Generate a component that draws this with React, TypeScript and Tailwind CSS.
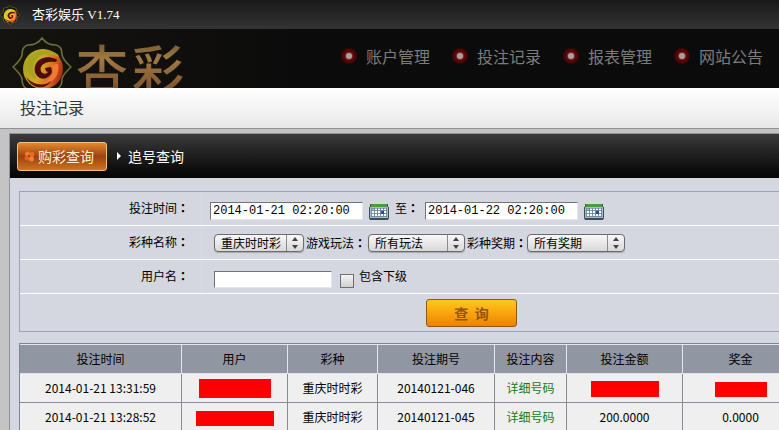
import React, { useState } from 'react';

interface BetRecord {
  time: string;
  userClass: string;
  lottery: string;
  issue: string;
  amount?: string;
  prize?: string;
}

const NAV_ITEMS = ['账户管理', '投注记录', '报表管理', '网站公告'];

const COLUMNS = [
  { title: '投注时间', width: 'w-[162px]' },
  { title: '用户', width: 'w-[106px]' },
  { title: '彩种', width: 'w-[90px]' },
  { title: '投注期号', width: 'w-[117px]' },
  { title: '投注内容', width: 'w-[72px]' },
  { title: '投注金额', width: 'w-[116px]' },
  { title: '奖金', width: 'w-[116px]' },
];

const RECORDS: BetRecord[] = [
  { time: '2014-01-21 13:31:59', userClass: 'w-[72px] h-[19px]', lottery: '重庆时时彩', issue: '20140121-046' },
  { time: '2014-01-21 13:28:52', userClass: 'w-[78px] h-[15px]', lottery: '重庆时时彩', issue: '20140121-045', amount: '200.0000', prize: '0.0000' },
];

function Emblem({ className }: { className: string }) {
  return (
    <svg viewBox="0 0 60 60" className={className} aria-hidden="true">
      <defs>
        <linearGradient id="ball" x1="0" y1="0.3" x2="1" y2="0.6">
          <stop offset="0" stopColor="#a8a41c" />
          <stop offset="0.45" stopColor="#d9a522" />
          <stop offset="0.75" stopColor="#d8641f" />
          <stop offset="1" stopColor="#a52a12" />
        </linearGradient>
      </defs>
      <path
        d="M30 1c4 6 9 7 14 7 5 1 6 5 6 10 1 5 5 8 9 12-4 4-8 7-9 12 0 5-1 9-6 10-5 0-10 1-14 7-4-6-9-7-14-7-5-1-6-5-6-10-1-5-5-8-9-12 4-4 8-7 9-12 0-5 1-9 6-10 5 0 10-1 14-7z"
        fill="#14150d"
        stroke="#6f6f38"
        strokeWidth="1.5"
      />
      <circle cx="31" cy="32" r="20" fill="url(#ball)" />
      <path d="M47 20c-8-4-19-4-24 4-4 7-2 14 3 18-9-1-13-10-10-18 4-9 15-13 25-9 4 1 6 3 6 5z" fill="#a5a51f" />
      <path d="M44 22c-7-3-15-2-19 3-4 6-3 13 3 16 5 2 10-1 12-6l-1-5-6 1 1 3 2 1c-2 3-6 2-7-1-2-5 4-10 13-9 3 0 4-2 2-3z" fill="#4a0d07" />
      <path d="M40 28c2 8-1 15-10 19 11 0 18-9 16-20z" fill="#ef7a34" />
      <path d="M14 40c7 8 18 10 25 4-5 9-19 9-25-4z" fill="#5a1208" />
    </svg>
  );
}

function NavDot() {
  return (
    <svg viewBox="0 0 18 18" className="size-[18px]" aria-hidden="true">
      <circle cx="9" cy="9" r="8.500" fill="#2c0707" />
      <circle cx="9" cy="9" r="7" fill="#560607" />
      <circle cx="9" cy="9" r="4" fill="#7d2c2c" />
      <circle cx="9" cy="9" r="3" fill="#a9a09d" />
    </svg>
  );
}

function CalendarIcon() {
  return (
    <svg viewBox="0 0 20 17" className="h-[17px] w-5" aria-hidden="true">
      <path d="M1 1h18v3h1v11l-1 2H1l-1-2V4h1z" fill="#35505c" />
      <path d="M1 4h18v11H1z" fill="#a9bcc6" />
      <path d="M2 1h16v3H2z" fill="#4c9c3c" />
      <path d="M6 5h2v2H6zM9 5h2v2H9zM12 5h2v2h-2zM15 5h2v2h-2zM3 8h2v2H3zM6 8h2v2H6zM9 8h2v2H9zM15 8h2v2h-2zM3 11h2v2H3zM6 11h2v2H6zM9 11h2v2H9zM12 11h2v2h-2zM15 11h2v2h-2z" fill="#fff" />
      <path d="M3 5.500h14M2.500 5v9M5.500 5v9M8.500 5v9M11.500 5v9M14.500 5v9M17.500 5v9M2 7.500h16M2 10.500h16M2 13.500h16" stroke="#5c7591" strokeWidth="0.6" />
      <path d="M12 8h3v3h-3z" fill="#2448b0" />
    </svg>
  );
}

// full-width colon, centred in its cell
function Colon() {
  return <span className="font-['Noto_Sans_CJK_TC',sans-serif] font-bold">：</span>;
}

function Select({ id, value, className }: { id: string; value: string; className: string }) {
  return (
    <span className={`relative inline-flex ${className}`}>
      <select
        id={id}
        className="h-[18px] w-full appearance-none rounded-[4px] border border-[#6b6b6b] bg-linear-to-b from-[#f8f8f8] to-[#d8d8d8] pl-[6px] text-xs leading-4 text-black shadow-[0_1px_1px_#a5a8ad]"
      >
        <option>{value}</option>
      </select>
      <svg viewBox="0 0 18 18" className="pointer-events-none absolute top-0 right-0 size-[18px]" aria-hidden="true">
        <path d="M0.500 1v16" stroke="#8b8b8b" />
        <path d="M6 7l3-4 3 4zM6 11l3 4 3-4z" fill="#444" />
      </svg>
    </span>
  );
}

function DateInput({ id, label, initial }: { id: string; label: string; initial: string }) {
  const [value, setValue] = useState(initial);
  return (
    <>
      <input
        id={id}
        aria-label={label}
        value={value}
        onChange={(e) => setValue(e.target.value)}
        className="h-[18px] w-[153px] border border-[#e4e6ea] border-t-[#70747a] border-l-[#70747a] bg-white px-[2px] font-['Liberation_Mono',monospace] text-xs text-black"
      />
      <button type="button" aria-label="选择日期" className="mx-[6px]">
        <CalendarIcon />
      </button>
    </>
  );
}

function FormRow({ label, htmlFor, children }: { label: string; htmlFor: string; children: React.ReactNode }) {
  return (
    <div className="flex h-[34px] border-b border-white">
      <label htmlFor={htmlFor} className="w-[182px] shrink-0 border-r border-[#d9dce3] pr-3 text-right leading-8">
        {label}
        <Colon />
      </label>
      {children}
    </div>
  );
}

function Redacted({ className }: { className: string }) {
  return <span className={`inline-block bg-[#fe0000] align-middle ${className}`} />;
}

export default function App() {
  return (
    <div className="flex h-screen flex-col overflow-hidden bg-[#c4c4c4] font-['Noto_Sans_CJK_SC',sans-serif] text-xs text-black">
      <div className="flex h-[29px] shrink-0 items-center bg-linear-to-b from-[#191919] to-[#343434] font-['Liberation_Serif','Noto_Sans_CJK_SC',serif] text-[13px] text-white">
        <Emblem className="mr-3 size-5 shrink-0 brightness-125" />
        杏彩娱乐 V1.74
      </div>

      <header className="flex h-[59px] shrink-0 overflow-hidden bg-linear-to-r from-[#15130f] to-[#0b0b0b] to-40% pl-3">
        <Emblem className="mt-2 size-[60px] shrink-0" />
        <span className="ml-1 flex shrink-0 gap-1 bg-linear-to-b from-[#6e572d] from-20% via-[#a07a42] to-[#80542f] bg-clip-text text-[52px] leading-[76px] font-medium text-transparent">
          <span>杏</span>
          <span>彩</span>
        </span>
        <nav className="ml-auto flex shrink-0 items-center gap-[29px] pr-4 pb-[5px]">
          {NAV_ITEMS.map((item) => (
            <a key={item} href="#" className="flex w-[82px] items-center gap-2 text-base leading-6 whitespace-nowrap text-[#7c7c7c]">
              <span className="-ml-2 shrink-0">
                <NavDot />
              </span>
              {item}
            </a>
          ))}
        </nav>
      </header>

      <h1 className="h-[41px] shrink-0 border-b border-[#929292] bg-linear-to-b from-white to-[#e8e8e8] pl-5 text-base leading-[38px] text-[#333]">
        投注记录
      </h1>

      <main className="mt-1 ml-[9px] min-w-[915px] grow border-t border-l border-[#8e949e] bg-[#d4d7df]">
        <div className="flex h-[44px] items-center gap-[10px] bg-linear-to-b from-[#3b3b3b] to-[#050505] pl-[7px] text-sm text-white">
          <button
            type="button"
            className="flex h-[29px] w-[90px] items-center gap-[3px] rounded-[3px] border border-[#f2c07c] bg-linear-to-b from-[#e58a2c] via-[#9b4210] to-[#cf731f] pl-[6px] text-[#fff4dc]"
          >
            <svg viewBox="0 0 11 11" className="size-[11px]" aria-hidden="true">
              <circle cx="3.500" cy="3" r="2.500" fill="#f2792b" />
              <circle cx="8" cy="3.500" r="2.500" fill="#ee6a22" />
              <circle cx="3" cy="7" r="2.500" fill="#e2601c" />
              <circle cx="7.500" cy="8" r="2.500" fill="#f08036" />
              <circle cx="5" cy="5" r="1" fill="#9b3a10" />
            </svg>
            购彩查询
          </button>
          <a href="#" className="flex items-center gap-[7px]">
            <svg viewBox="0 0 4 8" className="h-2 w-1" aria-hidden="true">
              <path d="M0 0l4 4-4 4z" fill="#fff" />
            </svg>
            追号查询
          </a>
        </div>

        <form className="mt-[13px] ml-[9px] border border-[#9aa5b4]" onSubmit={(e) => e.preventDefault()}>
          <FormRow label="投注时间" htmlFor="start">
            <div className="flex items-end pb-[5px] pl-2">
              <DateInput id="start" label="投注时间" initial="2014-01-21 02:20:00" />
              <label htmlFor="end" className="mr-[6px] leading-6">
                至
                <Colon />
              </label>
              <DateInput id="end" label="至" initial="2014-01-22 02:20:00" />
            </div>
          </FormRow>
          <FormRow label="彩种名称" htmlFor="lottery">
            <div className="flex items-center pl-3">
              <Select id="lottery" value="重庆时时彩" className="mr-[2px] w-[90px]" />
              <label htmlFor="play">
                游戏玩法
                <Colon />
              </label>
              <Select id="play" value="所有玩法" className="mx-[2px] w-[97px]" />
              <label htmlFor="issue">
                彩种奖期
                <Colon />
              </label>
              <Select id="issue" value="所有奖期" className="w-[98px]" />
            </div>
          </FormRow>
          <FormRow label="用户名" htmlFor="username">
            <div className="flex items-end pb-[5px] pl-3">
              <input
                id="username"
                className="h-[17px] w-[118px] border border-[#e4e6ea] border-t-[#70747a] border-l-[#70747a] bg-white px-[2px] text-xs"
              />
              <input
                id="children"
                type="checkbox"
                className="ml-2 size-[14px] appearance-none border border-[#707070] bg-linear-to-b from-[#f4f4f4] to-[#d0d0d0]"
              />
              <label htmlFor="children" className="ml-[5px] leading-6">
                包含下级
              </label>
            </div>
          </FormRow>
          <div className="flex h-[37px] items-center justify-center">
            <button
              type="submit"
              className="h-[28px] w-[91px] rounded-[3px] border border-[#8a5a16] bg-linear-to-b from-[#ffc81c] to-[#ee8100] text-sm font-bold text-[#94560c]"
            >
              查&nbsp; 询
            </button>
          </div>
        </form>

        <table className="mt-[11px] ml-[9px] w-[780px] table-fixed border-separate border-spacing-0 border-t border-l border-[#7c8796] text-center">
          <thead>
            <tr className="h-[30px] bg-[#9097a3]">
              {COLUMNS.map((column) => (
                <th
                  key={column.title}
                  className={`border-t border-r border-b border-[#e2e5ea] p-0 font-normal shadow-[0_1px_0_#7c8796] ${column.width}`}
                >
                  {column.title}
                </th>
              ))}
            </tr>
          </thead>
          <tbody>
            {RECORDS.map((record) => (
              <tr key={record.issue} className="h-[29px] bg-[#efefef] *:border-r *:border-b *:border-[#868c96] *:p-0">
                <td>{record.time}</td>
                <td>
                  <Redacted className={record.userClass} />
                </td>
                <td>{record.lottery}</td>
                <td>{record.issue}</td>
                <td>
                  <a href="#" className="text-[#1a781a]">
                    详细号码
                  </a>
                </td>
                <td>{record.amount ?? <Redacted className="h-4 w-[68px]" />}</td>
                <td>{record.prize ?? <Redacted className="h-[15px] w-[52px]" />}</td>
              </tr>
            ))}
          </tbody>
        </table>
      </main>
    </div>
  );
}
